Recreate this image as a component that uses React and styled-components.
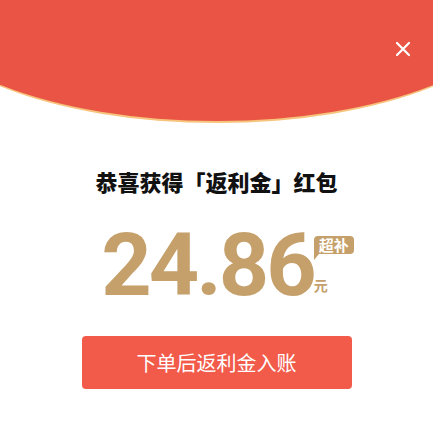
import React from "react";
import styled, { createGlobalStyle } from "styled-components";

const RED = "#e95444";
const GOLD = "#c5a06b";

const GlobalStyle = createGlobalStyle`
  body {
    margin: 0;
    background: #ffffff;
    font-family: "Noto Sans CJK SC", "Noto Sans", sans-serif;
  }
`;

const Page = styled.div`
  width: 433px;
  height: 423px;
  background: #ffffff;
  overflow: hidden;
`;

const Header = styled.div`
  position: relative;
  height: 124px;
  overflow: hidden;
`;

const Arc = styled.div`
  width: 608px;
  height: 121px;
  margin-left: -87.5px;
  background: ${RED};
  border-bottom: 2px solid #f6c47c;
  border-radius: 0 0 50% 50% / 0 0 100% 100%;
`;

const Close = styled.button`
  position: absolute;
  top: 40px;
  right: 21px;
  width: 18px;
  height: 18px;
  padding: 0;
  border: 0;
  background: transparent;
  display: flex;
  align-items: center;
  justify-content: center;
`;

const Title = styled.h2`
  margin: 42px 0 0;
  text-align: center;
  font-size: 22px;
  line-height: 30px;
  font-weight: 900;
  color: #111111;
`;

const AmountRow = styled.div`
  margin-top: 25px;
  display: flex;
  justify-content: center;
  padding-left: 22px;
`;

const Amount = styled.div`
  font-family: Roboto, "Liberation Sans", sans-serif;
  font-weight: 700;
  font-size: 88px;
  line-height: 88px;
  color: ${GOLD};
  letter-spacing: -3px;
`;

const Side = styled.div`
  display: flex;
  flex-direction: column;
  align-items: flex-start;
  padding-top: 15px;
  margin-left: 0;
`;

const Badge = styled.span`
  position: relative;
  display: block;
  padding: 0 5px;
  height: 18px;
  line-height: 18px;
  font-size: 15px;
  font-weight: 700;
  color: #ffffff;
  background: ${GOLD};
  border-radius: 4px 4px 4px 0;

  &::after {
    content: "";
    position: absolute;
    left: 0;
    top: 18px;
    border-left: 5px solid ${GOLD};
    border-bottom: 6px solid transparent;
  }
`;

const Unit = styled.span`
  margin-top: 22px;
  font-size: 14px;
  line-height: 18px;
  font-weight: 700;
  color: ${GOLD};
`;

const Action = styled.button`
  display: flex;
  align-items: center;
  justify-content: center;
  width: 270px;
  height: 53px;
  margin: 27px auto 0;
  border: 0;
  border-radius: 4px;
  background: #f25a4a;
  color: #ffffff;
  font-family: "Noto Sans CJK SC", "Noto Sans", sans-serif;
  font-size: 20px;
  font-weight: 400;
`;

export default function App() {
  return (
    <Page>
      <GlobalStyle />
      <Header>
        <Arc />
        <Close aria-label="close">
          <svg width="16" height="16" viewBox="0 0 16 16">
            <path
              d="M2 2 L14 14 M14 2 L2 14"
              stroke="#ffffff"
              strokeWidth="2.2"
              strokeLinecap="round"
            />
          </svg>
        </Close>
      </Header>
      <Title>恭喜获得「返利金」红包</Title>
      <AmountRow>
        <Amount>24.86</Amount>
        <Side>
          <Badge>超补</Badge>
          <Unit>元</Unit>
        </Side>
      </AmountRow>
      <Action>下单后返利金入账</Action>
    </Page>
  );
}
